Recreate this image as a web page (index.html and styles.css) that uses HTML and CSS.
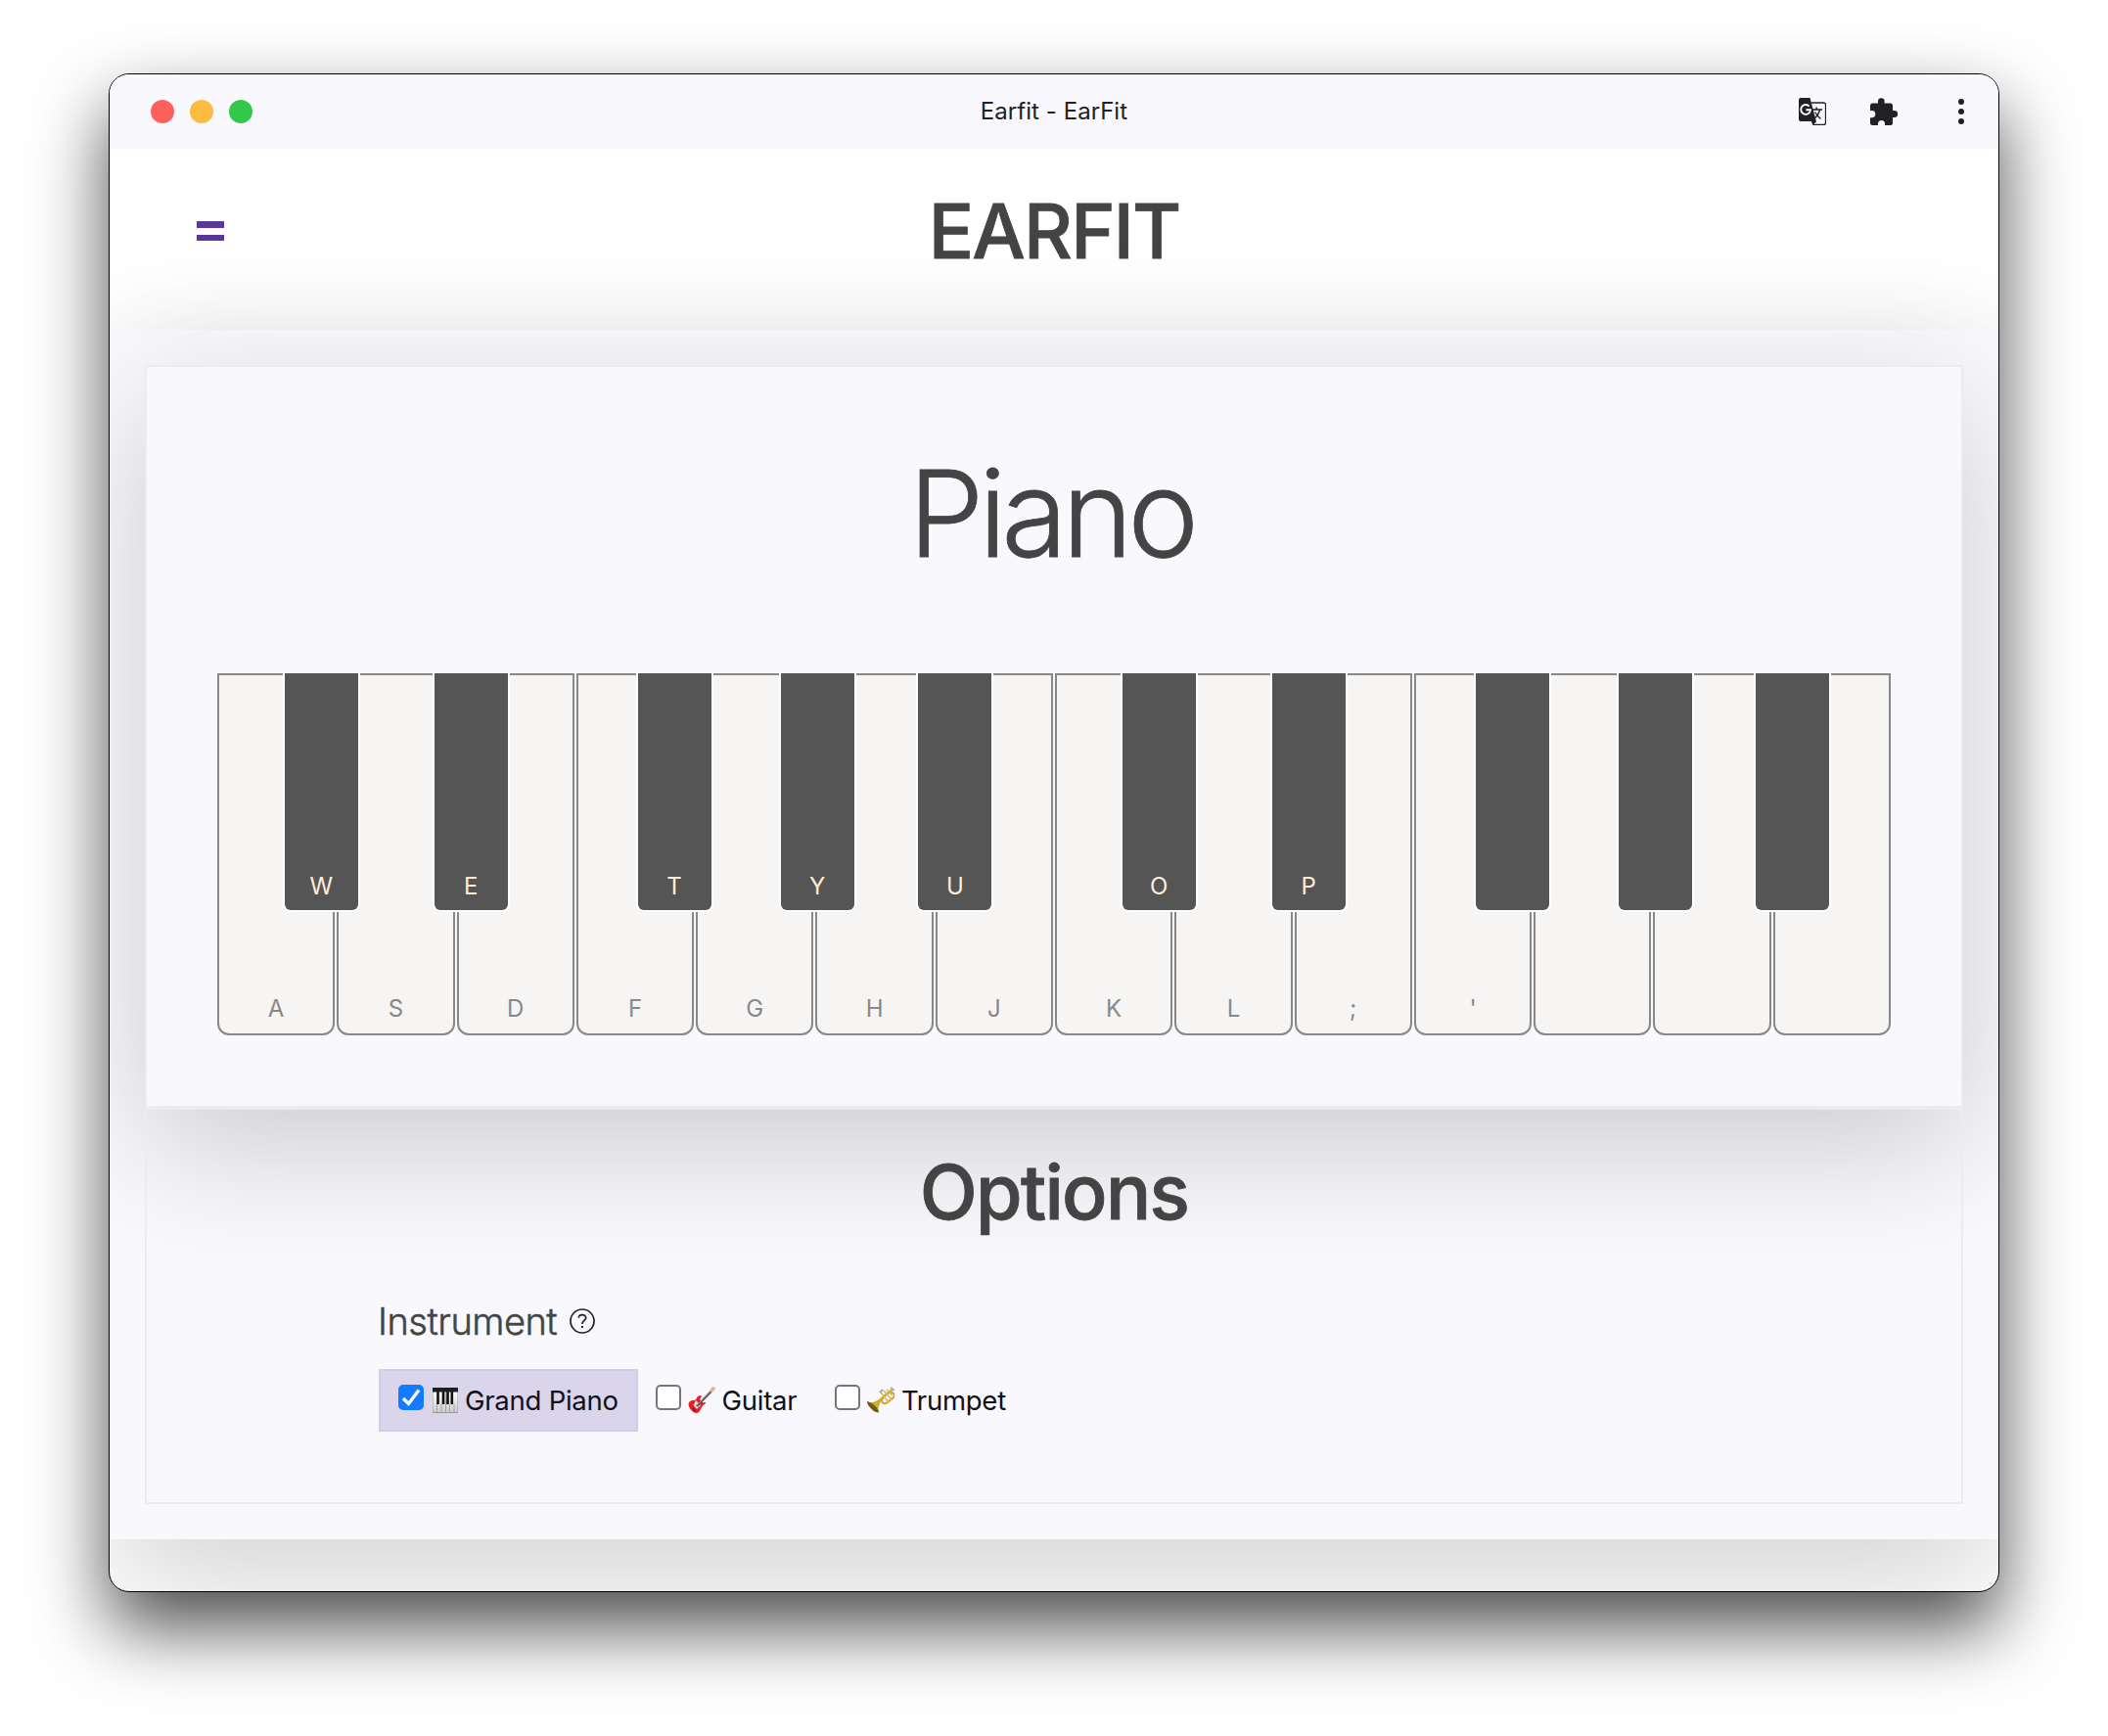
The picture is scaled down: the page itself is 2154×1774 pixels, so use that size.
FILE: index.html
```html
<!DOCTYPE html>
<html lang="en">
<head>
<meta charset="utf-8">
<title>Earfit - EarFit</title>
<link rel="stylesheet" href="styles.css">
</head>
<body>
<div class="window">
  <div class="titlebar">
    <div class="lights"><span class="light red"></span><span class="light amber"></span><span class="light green"></span></div>
    <div class="window-title">Earfit - EarFit</div>
    <div class="tools">
      <svg class="tool" viewBox="0 0 28 28">
        <path d="M13 5H25.5Q27.5 5 27.5 7V25.5Q27.5 27.5 25.500 27.500H15L13 22" fill="none" stroke="#202124" stroke-width="1.300"/>
        <path d="M2 0H11.500L18 24.500L14.500 27.500L13 24H2Q0 24 0 22V2Q0 0 2 0Z" fill="#202124"/>
        <path d="M10.700 8.600A4.900 4.900 0 1 0 12 12.200H7.400" fill="none" stroke="#fff" stroke-width="1.900"/>
        <path d="M14 12H24M18.200 9.500V12M21.700 12Q20 18 15.500 21.500M16.500 14.500Q19 18.500 22.500 21.500" fill="none" stroke="#202124" stroke-width="1.400"/>
      </svg>
      <svg class="tool" viewBox="0 0 28 28">
        <path d="M2.500 5.500H8V3.500A3.300 3.300 0 0 1 14.600 3.500V5.500H20.500Q23 5.500 23 8V13H24.700A3.300 3.300 0 0 1 24.700 20H23V25.500Q23 28 20.500 28H15V26.500A3.500 3.500 0 0 0 8 26.500V28H2.500Q0 28 0 25.500V20.200H1.700A3.500 3.500 0 0 0 1.700 13H0V8Q0 5.500 2.500 5.500Z" fill="#202124"/>
      </svg>
      <svg class="dots" viewBox="0 0 6 26"><circle cx="3" cy="3" r="3"/><circle cx="3" cy="13" r="3"/><circle cx="3" cy="23" r="3"/></svg>
    </div>
  </div>
  <header class="header">
    <div class="menu"><span></span><span></span></div>
    <h1 class="brand">EARFIT</h1>
  </header>
  <main class="page">
    <section class="card stage">
      <h2 class="stage-title">Piano</h2>
      <div class="keys">
        <div class="key">A<div class="black w">W</div></div>
        <div class="key">S<div class="black e">E</div></div>
        <div class="key">D</div>
        <div class="key">F<div class="black t">T</div></div>
        <div class="key">G<div class="black y">Y</div></div>
        <div class="key">H<div class="black u">U</div></div>
        <div class="key">J</div>
        <div class="key">K<div class="black w">O</div></div>
        <div class="key">L<div class="black e">P</div></div>
        <div class="key">;</div>
        <div class="key">'<div class="black t"></div></div>
        <div class="key"><div class="black y"></div></div>
        <div class="key"><div class="black u"></div></div>
        <div class="key"></div>
      </div>
    </section>
    <section class="card options">
      <h2 class="options-title">Options</h2>
      <div class="field">
        <div class="label"><span class="label-text">Instrument</span>
          <svg class="help" viewBox="0 0 26 26" fill="none" stroke="#222"><circle cx="13" cy="13" r="12" stroke-width="1.700"/><path d="M9.300 9.800C9.500 5.500 16.700 5.500 16.700 9.700C16.700 12.500 13 12.500 13 16" stroke-width="1.700"/><path d="M13 18V20" stroke-width="2"/></svg>
        </div>
        <div class="choices">
          <div class="choice selected"><span class="check on"><svg viewBox="0 0 26 26"><path d="M5 14L10.500 19.500L21 5.500" fill="none" stroke="#fff" stroke-width="3.400"/></svg></span>
            <svg class="emoji" viewBox="0 0 28 28">
              <defs><linearGradient id="ivory" x2="0" y2="1"><stop stop-color="#fff"/><stop offset="1" stop-color="#ccc"/></linearGradient></defs>
              <rect x="1" y="1.500" width="26" height="25.500" fill="#999"/><rect x="1.500" y="5" width="25" height="21" fill="url(#ivory)"/><rect x="1" y="1" width="26" height="4.500" fill="#1b1e22"/>
              <path d="M5.500 18V26M10 18V26M14.500 5V26M18.500 18V26M23 18V26" stroke="#999" stroke-width=".8"/><path d="M6.500 5V18M12 5V18M16.500 5V18M20.800 5V18" stroke="#111" stroke-width="2.600"/>
            </svg><span>Grand Piano</span></div>
          <div class="choice"><span class="check"></span>
            <svg class="emoji" viewBox="0 0 28 28">
              <path d="M2 15C5 13 7 15 8.500 12.500C9.500 9 13 8 14 10L12 13L15.500 16.500C18 15 19 16 17 18C14 20 14 21 12.500 24C11 28 6 28 2.500 23C0 19 0 17 2 15Z" fill="#f11b22"/><path d="M8 14L13 19L9 23L5.500 19Z" fill="#d8d8dc"/><path d="M5 22L8 25" stroke="#333" stroke-width="1.500"/><path d="M9 20L24 4.500" stroke="#555" stroke-width="2.400"/><path d="M9 19L24 3.500" stroke="#aaa" stroke-width=".8"/><path d="M22 4L25 0L28 1L27 4L24 6Z" fill="#ecb182"/>
            </svg><span>Guitar</span></div>
          <div class="choice"><span class="check"></span>
            <svg class="emoji" viewBox="0 0 28 28">
              <path d="M0 15C3 17 9 17 17 9L25 2L26.500 3.500L18 11C12 17 11 21 12 26C9 28 0 20 0 15Z" fill="#d5aa25"/><path d="M0 15C4 16 11 21 12 26C9 28 0 20 0 15Z" fill="#735813"/><path d="M17 10C13 14 16 20 21 16L27 11C30 7 24 4 21 7Z" fill="none" stroke="#cba52d" stroke-width="2"/><path d="M14 6L22 16M17 4L25 13M20 3L26 9" stroke="#d8bc55" stroke-width="1.700"/><path d="M13 6L16 3M24 1L28 4" stroke="#aaa" stroke-width="2"/>
            </svg><span>Trumpet</span></div>
        </div>
      </div>
    </section>
  </main>
  <footer class="footer"></footer>
</div>
</body>
</html>
```
FILE: styles.css
```css
* { box-sizing: border-box; }
body { margin: 0; height: 1774px; padding: 75px 111px 0; background: #fff; font-family: Inter, "Liberation Sans", sans-serif; color: #444; overflow: hidden; }
h1, h2 { margin: 0; white-space: nowrap; }
.window { width: 1932px; height: 1552px; border: 1px solid #000; border-radius: 21px; overflow: hidden; background: #fff; box-shadow: 0 36px 76px rgba(0,0,0,.7); display: flex; flex-direction: column; }
.titlebar { flex: none; height: 76px; background: #f8f8fd; display: grid; grid-template-columns: 1fr auto 1fr; align-items: center; padding: 0 35px; position: relative; z-index: 2; }
.lights { display: flex; gap: 16px; padding-left: 7px; }
.light { width: 24px; height: 24px; border-radius: 50%; }
.red { background: #fe605c; }
.amber { background: #fdbb40; }
.green { background: #34c84a; }
.window-title { font-size: 24px; line-height: 28px; color: #202124; letter-spacing: .05px; }
.tools { display: flex; justify-content: flex-end; align-items: center; }
.tool { width: 28px; height: 28px; margin-right: 44.500px; }
.tool + .tool { margin-right: 62.500px; }
.dots { width: 6px; height: 26px; fill: #202124; }
.header { flex: none; height: 185px; display: grid; grid-template-columns: 1fr auto 1fr; padding: 36px 89px 0; align-items: start; }
.menu { display: flex; flex-direction: column; gap: 7px; margin: 38px 0 0 .400px; }
.menu span { width: 28px; height: 6.500px; background: #5a3696; }
.brand { font-size: 77px; font-weight: 500; line-height: 96px; letter-spacing: -1.800px; -webkit-text-stroke: .8px #444; }
.page { flex: none; height: 1236px; padding: 36px; background: #f8f8fd; box-shadow: 0 40px 126px rgba(0,0,0,.18); }
.card { border: 2px solid #ececec; }
.stage { height: 759px; background: #f8f8fd; box-shadow: 0 40px 126px rgba(0,0,0,.18); padding: 72px 72px 0; }
.stage-title { font-size: 123px; font-weight: 300; line-height: 156px; text-align: center; letter-spacing: -5.500px; padding-right: 6px; -webkit-text-stroke: .8px #444; }
.keys { display: grid; grid-template-columns: repeat(14, 1fr); gap: 2px; margin-top: 85px; height: 370px; }
.key { position: relative; border: 2px solid #888; border-radius: 0 0 12px 12px; background: #f6f5f4; display: flex; justify-content: center; align-items: flex-end; padding-bottom: 10px; font-size: 24px; line-height: 30px; color: #888; }
.black { position: absolute; z-index: 1; top: -2px; width: 79px; height: 244px; border: solid #fff; border-width: 0 2px 2px; border-radius: 0 0 8px 8px; background: #555; color: #ffebd7; display: flex; justify-content: center; align-items: flex-end; padding-bottom: 9px; }
.w { left: 64.800px; }
.e { left: 95.500px; }
.t { left: 58.700px; }
.y { left: 82.400px; }
.u { left: 101px; }
.options { height: 405px; padding: 44px 237px 0; }
.options-title { font-size: 77px; font-weight: 500; line-height: 80px; text-align: center; letter-spacing: -1.700px; -webkit-text-stroke: .8px #444; }
.field { margin-top: 68px; }
.label { display: flex; align-items: center; gap: 13px; height: 48px; }
.label-text { font-size: 38px; font-weight: 300; letter-spacing: -.500px; margin-left: -1px; -webkit-text-stroke: .5px #444; }
.help { width: 26px; height: 26px; }
.choices { display: flex; margin-top: 25px; color: #11101a; font-size: 27.500px; letter-spacing: -.250px; }
.choice { display: flex; align-items: center; height: 64px; padding: 0 19px 0 18px; border: 2px solid transparent; white-space: nowrap; }
.selected { width: 265px; background: #dad5eb; border-color: #d2cce9; }
.choice + .choice { padding-left: 16px; }
.check { flex: none; width: 26px; height: 26px; border: 2px solid #767676; border-radius: 5px; background: #fff; margin-bottom: 6px; }
.check.on { border: 0; background: #147aff; }
.check svg { display: block; }
.emoji { flex: none; width: 28px; height: 28px; margin: 0 7px 0 6.500px; }
.selected .emoji { margin: 0 6px 0 8px; }
```
